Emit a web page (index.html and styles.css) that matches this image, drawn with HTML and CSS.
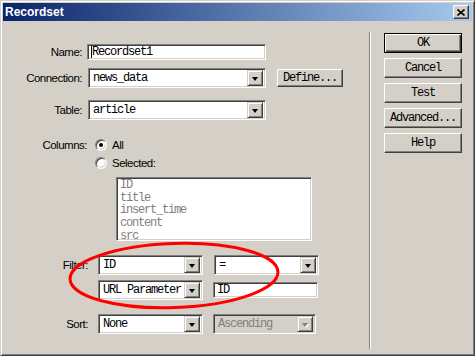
FILE: index.html
```html
<!DOCTYPE html>
<html lang="en">

<head>
  <meta charset="UTF-8">
  <title>Recordset</title>
  <link rel="stylesheet" href="styles.css">
</head>

<body>
  <div class="window">
    <div class="titlebar">
      <span class="title">Recordset</span>
      <span class="close-btn">
        <svg width="8" height="7" viewBox="0 0 8 7"><path d="M0.5 0.5L7.5 6.5M7.5 0.5L0.5 6.5" stroke="#000" stroke-width="1.6" /></svg>
      </span>
    </div>

    <div class="client">
      <div class="form">
        <div class="row row-name">
          <span class="lbl">Name:</span>
          <div class="field text name-input"><span class="caret"></span>Recordset1</div>
        </div>

        <div class="row row-conn">
          <span class="lbl">Connection:</span>
          <div class="field select wide">
            <span class="value">news_data</span>
            <span class="arrow"><i class="tri"></i></span>
          </div>
          <div class="btn btn-define">Define...</div>
        </div>

        <div class="row row-table">
          <span class="lbl">Table:</span>
          <div class="field select wide">
            <span class="value">article</span>
            <span class="arrow"><i class="tri"></i></span>
          </div>
        </div>

        <div class="row row-cols">
          <span class="lbl lbl-cols">Columns:</span>
          <span class="radio"><i class="dot"></i></span>
          <span class="radio-text">All</span>
        </div>
        <div class="row row-selected">
          <span class="radio"></span>
          <span class="radio-text">Selected:</span>
        </div>

        <div class="field listbox">
          <div>ID</div>
          <div>title</div>
          <div>insert_time</div>
          <div>content</div>
          <div>src</div>
        </div>

        <div class="row row-filter">
          <span class="lbl lbl-filter">Filter:</span>
          <div class="field select narrow">
            <span class="value">ID</span>
            <span class="arrow"><i class="tri"></i></span>
          </div>
          <div class="field select narrow second">
            <span class="value">=</span>
            <span class="arrow"><i class="tri"></i></span>
          </div>
        </div>

        <div class="row row-param">
          <span class="lbl lbl-filter"></span>
          <div class="field select narrow">
            <span class="value">URL Parameter</span>
            <span class="arrow"><i class="tri"></i></span>
          </div>
          <div class="field text param-input">ID</div>
        </div>

        <div class="row row-sort">
          <span class="lbl lbl-filter">Sort:</span>
          <div class="field select narrow">
            <span class="value">None</span>
            <span class="arrow"><i class="tri"></i></span>
          </div>
          <div class="field select narrow second disabled">
            <span class="value">Ascending</span>
            <span class="arrow"><i class="tri"></i></span>
          </div>
        </div>
      </div>

      <div class="sep"></div>

      <div class="actions">
        <div class="btn btn-default">OK</div>
        <div class="btn">Cancel</div>
        <div class="btn">Test</div>
        <div class="btn">Advanced...</div>
        <div class="btn">Help</div>
      </div>
    </div>
  </div>

  <!-- hand-drawn annotation over the filter rows -->
  <svg class="mark" width="475" height="356" viewBox="0 0 475 356">
    <ellipse cx="174" cy="275.5" rx="104" ry="32" transform="rotate(-2 174 275.5)" fill="none" stroke="#FF0000" stroke-width="3" />
  </svg>
</body>

</html>
```

FILE: styles.css
```css
* {
  box-sizing: border-box;
}

body {
  margin: 0;
  background-color: #D4D0C8;
  font-family: "Liberation Sans", Arial, sans-serif;
  font-size: 11.5px;
  letter-spacing: -0.5px;
  color: #000;
}

/* Window frame */
.window {
  width: 475px;
  height: 356px;
  padding: 2px;
  display: flex;
  flex-direction: column;
  background-color: #D4D0C8;
  border: 1px solid;
  border-color: #D4D0C8 #404040 #404040 #D4D0C8;
  box-shadow: inset 1px 1px #fff, inset -1px -1px #808080;
}

.titlebar {
  flex: none;
  height: 18px;
  display: flex;
  align-items: center;
  justify-content: space-between;
  padding: 0 3px 0 2px;
  background: linear-gradient(to right, #0A246A, #A6CAF0);
}

.title {
  color: #fff;
  font-weight: bold;
  font-size: 12px;
  letter-spacing: 0;
}

.close-btn {
  width: 16px;
  height: 14px;
  display: flex;
  align-items: center;
  justify-content: center;
  background-color: #D4D0C8;
  border: 1px solid;
  border-color: #fff #404040 #404040 #fff;
  box-shadow: inset -1px -1px #808080;
}

.client {
  flex: 1;
  display: flex;
}

/* Left side form */
.form {
  width: 363px;
  padding-top: 23px;
}

.row {
  display: flex;
  align-items: center;
}

.lbl {
  width: 79px;
  margin-right: 6px;
  text-align: right;
}

.lbl-cols {
  width: 84px;
  margin-right: 8px;
}

.lbl-filter {
  width: 85px;
  margin-right: 10px;
}

.row-conn {
  margin-top: 8px;
}

.row-table {
  margin-top: 12px;
}

.row-cols {
  margin-top: 17px;
  height: 16px;
}

.row-selected {
  margin-top: 2px;
  height: 16px;
  padding-left: 92px;
}

.row-filter {
  margin-top: 14px;
}

.row-param {
  margin-top: 5px;
}

.row-sort {
  margin-top: 14px;
}

/* Sunken fields */
.field {
  background-color: #fff;
  border: 1px solid;
  border-color: #808080 #fff #fff #808080;
  box-shadow: inset 1px 1px #404040, inset -1px -1px #D4D0C8;
  font-family: "Liberation Mono", monospace;
  font-size: 12px;
  letter-spacing: -1.2px;
}

.text {
  height: 16px;
  display: flex;
  align-items: center;
  padding-left: 3px;
}

.name-input {
  width: 179px;
  margin-left: -1px;
}

.caret {
  width: 1px;
  height: 12px;
  background-color: #000;
}

.param-input {
  width: 105px;
  margin-left: 10px;
}

.select {
  height: 20px;
  display: flex;
  align-items: center;
  justify-content: space-between;
  padding: 2px;
}

.select .value {
  padding-left: 2px;
  white-space: nowrap;
}

.wide {
  width: 178px;
}

.narrow {
  width: 105px;
}

.second {
  margin-left: 11px;
}

.disabled {
  background-color: #D4D0C8;
  width: 103px;
  margin-left: 10px;
}

.disabled .value {
  color: #808080;
}

.arrow {
  width: 16px;
  height: 16px;
  flex: none;
  display: flex;
  align-items: center;
  justify-content: center;
  background-color: #D4D0C8;
  border: 1px solid;
  border-color: #D4D0C8 #404040 #404040 #D4D0C8;
  box-shadow: inset 1px 1px #fff, inset -1px -1px #808080;
}

.tri {
  width: 0;
  height: 0;
  margin-top: 1px;
  border-left: 3.5px solid transparent;
  border-right: 3.5px solid transparent;
  border-top: 4px solid #000;
}

.disabled .tri {
  border-top-color: #808080;
  filter: drop-shadow(1px 1px 0 #fff);
}

/* Column list */
.listbox {
  width: 196px;
  height: 64px;
  margin: 6px 0 0 113px;
  padding: 1px 0 0 3px;
  line-height: 12.7px;
  color: #808080;
}

/* Radio buttons */
.radio {
  width: 12px;
  height: 12px;
  flex: none;
  display: flex;
  align-items: center;
  justify-content: center;
  border-radius: 50%;
  background-color: #fff;
  border: 1px solid;
  border-color: #808080 #fff #fff #808080;
  box-shadow: inset 1px 1px #404040, inset -1px -1px #D4D0C8;
}

.dot {
  width: 4px;
  height: 4px;
  border-radius: 50%;
  background-color: #000;
}

.radio-text {
  margin-left: 5px;
}

/* Separator and buttons */
.sep {
  width: 2px;
  margin: 11px 0 4px 3px;
  border-left: 1px solid #808080;
  border-right: 1px solid #fff;
}

.actions {
  padding: 12px 0 0 13px;
  display: flex;
  flex-direction: column;
  gap: 5px;
}

.btn {
  width: 78px;
  height: 20px;
  display: flex;
  align-items: center;
  justify-content: center;
  background-color: #D4D0C8;
  border: 1px solid;
  border-color: #fff #404040 #404040 #fff;
  box-shadow: inset -1px -1px #808080;
  font-family: "Liberation Mono", monospace;
  font-size: 12px;
  letter-spacing: -1.2px;
}

.btn-default {
  border-color: #000;
  box-shadow: inset 1px 1px #fff, inset -1px -1px #404040, inset -2px -2px #808080;
}

.btn-define {
  width: 66px;
  height: 18px;
  margin-left: 11px;
}

/* Annotation */
.mark {
  position: absolute;
  left: 0;
  top: 0;
  pointer-events: none;
}
```
